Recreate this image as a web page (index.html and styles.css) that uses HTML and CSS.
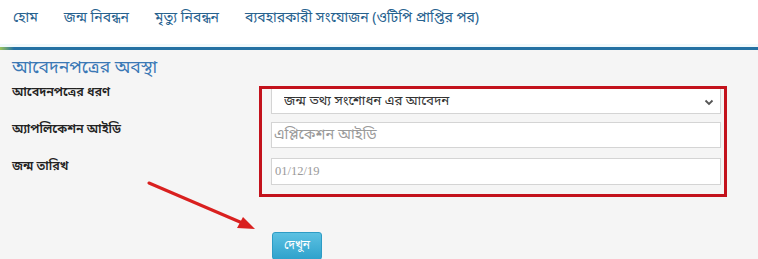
FILE: index.html
```html
<!DOCTYPE html>
<html lang="bn">
<head>
  <meta charset="UTF-8">
  <title>আবেদনপত্রের অবস্থা</title>
  <link rel="stylesheet" href="styles.css">
</head>
<body>
  <!-- Top menu -->
  <header class="topbar">
    <nav class="menu">
      <a href="#">হোম</a>
      <a href="#">জন্ম নিবন্ধন</a>
      <a href="#">মৃত্যু নিবন্ধন</a>
      <a href="#">ব্যবহারকারী সংযোজন (ওটিপি প্রাপ্তির পর)</a>
    </nav>
  </header>
  <div class="topline"></div>

  <!-- Status form -->
  <main class="page">
    <h2 class="page-title">আবেদনপত্রের অবস্থা</h2>
    <form class="status-form">
      <div class="labels">
        <label for="appType">আবেদনপত্রের ধরণ</label>
        <label for="appId">অ্যাপলিকেশন আইডি</label>
        <label for="dob">জন্ম তারিখ</label>
      </div>
      <div class="field-box">
        <div class="select-wrap">
          <select id="appType">
            <option>জন্ম তথ্য সংশোধন এর আবেদন</option>
          </select>
          <svg class="chevron" width="10" height="7" viewBox="0 0 10 7"><path d="M1.5 1.5 L5 5 L8.5 1.5" fill="none" stroke="#555" stroke-width="1.8"/></svg>
        </div>
        <input type="text" id="appId" class="field" placeholder="এপ্লিকেশন আইডি">
        <input type="text" id="dob" class="field date" placeholder="01/12/19">
      </div>
    </form>
    <button type="button" class="view-btn">দেখুন</button>

    <!-- annotation arrow -->
    <svg class="arrow" width="120" height="60" viewBox="0 0 120 60">
      <line x1="2" y1="2" x2="100" y2="44" stroke="#d9201f" stroke-width="3" stroke-linecap="round"/>
      <path d="M108 48 L90 47 L96 36 Z" fill="#d9201f"/>
    </svg>
  </main>
</body>
</html>
```

FILE: styles.css
```css
/* General */
body {
  margin: 0;
  font-family: "Noto Sans Bengali", "Noto Serif Bengali", "Lohit Bengali", "Noto Sans", sans-serif;
  background: #f5f5f5;
  color: #222;
  width: 758px;
  height: 259px;
  overflow: hidden;
}

/* Header */
.topbar {
  background: #fff;
  height: 44px;
  border-bottom: 3px solid #f0f9fc;
}

.menu {
  display: flex;
  gap: 26px;
  padding: 6px 0 0 13px;
}

.menu a {
  color: #27628f;
  text-decoration: none;
  font-size: 14px;
  line-height: 26px;
}

.topline {
  height: 3px;
  background: linear-gradient(to right, #9bc45a 0, #2471a3 14px, #2471a3 100%);
}

/* Page */
.page {
  position: relative;
  padding: 6px 12px 0 12px;
}

.page-title {
  margin: 0;
  font-size: 17.5px;
  font-weight: normal;
  color: #3a78b5;
  line-height: 26px;
}

.status-form {
  display: flex;
  margin-top: 4px;
}

.labels {
  width: 247px;
  display: flex;
  flex-direction: column;
}

.labels label {
  font-size: 12.5px;
  font-weight: 600;
  color: #222;
  height: 37px;
  line-height: 14px;
}

.field-box {
  width: 450px;
  border: 3px solid #c3121c;
  padding: 0 3px 3px 9px;
  display: flex;
  flex-direction: column;
}

.select-wrap {
  position: relative;
  height: 25px;
}

select {
  width: 100%;
  height: 25px;
  border: 1px solid #d4d4d4;
  border-top: none;
  background: #fff;
  font-family: inherit;
  font-size: 13.3px;
  color: #333;
  padding: 0 0 0 12px;
  appearance: none;
  -webkit-appearance: none;
  border-radius: 0;
}

.chevron {
  position: absolute;
  right: 7px;
  top: 10px;
}

.field {
  box-sizing: border-box;
  width: 100%;
  height: 26px;
  border: 1px solid #d4d4d4;
  background: #fff;
  font-family: inherit;
  font-size: 14.5px;
  padding: 0 0 0 2px;
  margin-top: 8px;
}

.field::placeholder {
  color: #9a9a9a;
}

.field.date {
  height: 27px;
  margin-top: 10px;
  font-family: "Liberation Serif", serif;
  font-size: 12.5px;
  padding-left: 3px;
}

.view-btn {
  display: block;
  margin: 35px 0 0 260px;
  width: 50px;
  height: 28px;
  border: 1px solid #2d9cc5;
  border-radius: 3px;
  background: linear-gradient(#5cc1e2, #2fa2cc);
  color: #fff;
  font-family: inherit;
  font-size: 12px;
  padding: 0;
}

.arrow {
  position: absolute;
  left: 147px;
  top: 131px;
}
```
